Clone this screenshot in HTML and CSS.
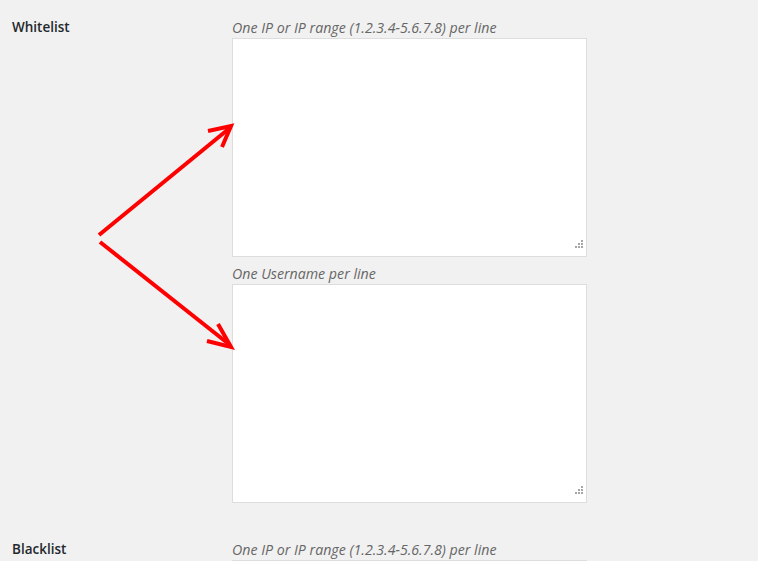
FILE: index.html
```html
<!DOCTYPE html>
<html>
<head>
<meta charset="utf-8">
<link rel="stylesheet" href="styles.css">
</head>
<body>
<div class="page">
  <div class="row">
    <div class="label">Whitelist</div>
    <div class="field">
      <p class="desc">One IP or IP range (1.2.3.4-5.6.7.8) per line</p>
      <div class="box"><textarea class="area"></textarea><span class="grip"></span></div>
      <p class="desc second">One Username per line</p>
      <div class="box"><textarea class="area"></textarea><span class="grip"></span></div>
    </div>
  </div>
  <div class="row blacklist">
    <div class="label">Blacklist</div>
    <div class="field">
      <p class="desc">One IP or IP range (1.2.3.4-5.6.7.8) per line</p>
      <div class="box"><textarea class="area"></textarea></div>
    </div>
  </div>
  <svg class="arrows" width="758" height="561" viewBox="0 0 758 561">
    <g fill="none" stroke="#ff0000" stroke-width="4" stroke-linecap="butt" stroke-linejoin="miter">
      <line x1="99" y1="235" x2="231" y2="127"/>
      <polyline points="208,131 231,126 222,147"/>
      <line x1="100" y1="242" x2="230" y2="345"/>
      <polyline points="218,324 231,347 207,341"/>
    </g>
  </svg>
</div>
</body>
</html>
```

FILE: styles.css
```css
html, body {
  margin: 0;
  padding: 0;
  background: #f1f1f1;
}
.page {
  position: relative;
  width: 758px;
  height: 561px;
  overflow: hidden;
  font-family: "Open Sans", "Noto Sans", sans-serif;
  color: #23282d;
}
.row {
  display: grid;
  grid-template-columns: 208px 355px;
  column-gap: 12px;
  padding: 0 0 0 12px;
}
.row:first-child {
  padding-top: 17px;
}
.label {
  font-size: 13.5px;
  font-weight: 600;
  line-height: 20px;
}
.desc {
  margin: 0;
  font-size: 14.2px;
  font-style: italic;
  color: #666;
  line-height: 21px;
  height: 21px;
}
.desc.second {
  margin-top: 6px;
}
.box {
  position: relative;
  width: 355px;
  height: 219px;
}
.area {
  display: block;
  box-sizing: border-box;
  width: 355px;
  height: 219px;
  margin: 0;
  border: 1px solid #ddd;
  background: #fff;
  resize: none;
  padding: 0;
}
.grip {
  position: absolute;
  left: 343px;
  top: 208px;
  width: 2px;
  height: 2px;
  background: #a6a6a6;
  box-shadow: 6px -6px #a6a6a6, 3px -3px #a6a6a6, 6px -3px #a6a6a6, 3px 0 #a6a6a6, 6px 0 #a6a6a6;
}
.blacklist {
  margin-top: 36px;
}
.arrows {
  position: absolute;
  left: 0;
  top: 0;
  pointer-events: none;
}
```
